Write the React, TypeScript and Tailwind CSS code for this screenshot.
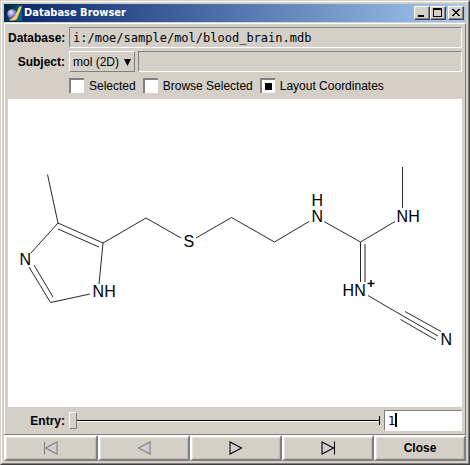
import { useState } from "react";
import type { ReactNode } from "react";

function TitleButton({ label, children }: { label: string; children: ReactNode }) {
  return (
    <button
      aria-label={label}
      className="flex h-[14px] w-4 items-center justify-center border border-t-white border-l-white border-r-[#404040] border-b-[#404040] bg-[#d4d0c8] shadow-[inset_-1px_-1px_0_#808080]"
    >
      <svg width="14" height="12" viewBox="0 0 14 12" shapeRendering="crispEdges">
        {children}
      </svg>
    </button>
  );
}

function NavButton({ label, disabled = false, children }: { label: string; disabled?: boolean; children: ReactNode }) {
  return (
    <button
      aria-label={label}
      disabled={disabled}
      className="flex h-[26px] flex-1 items-center justify-center border-2 border-t-white border-l-white border-r-[#808080] border-b-[#808080] bg-[#d4d0c8] text-[12px] leading-4 font-bold text-black shadow-[inset_1px_1px_0_#e4e2dd,inset_-1px_-1px_0_#c0bdb6] first:basis-[6px] disabled:text-[#808080]"
    >
      {children}
    </button>
  );
}

function NavIcon({ d }: { d: string }) {
  return (
    <svg width="14" height="14" viewBox="0 0 14 14" fill="#d0d0d4" stroke="currentColor" strokeWidth="1.1">
      <path d={d} />
    </svg>
  );
}

function CheckOption({ id, label, initial = false }: { id: string; label: string; initial?: boolean }) {
  const [on, setOn] = useState(initial);
  return (
    <div className="flex items-center gap-[5px]">
      <input
        id={id}
        type="checkbox"
        checked={on}
        onChange={(e) => setOn(e.target.checked)}
        className="grid size-[15px] shrink-0 appearance-none place-content-center border-t-2 border-l-2 border-[#808080] bg-white checked:before:block checked:before:size-[7px] checked:before:bg-black checked:before:content-['']"
      />
      <label htmlFor={id}>{label}</label>
    </div>
  );
}

const bonds: number[][] = [
  [47.5, 174.5, 58, 223],
  [58, 223, 103, 243],
  [58, 229, 99, 247],
  [103, 243, 99, 284],
  [58, 223, 31, 253],
  [29, 267, 50.5, 302.5],
  [34, 265, 53, 297],
  [50.5, 302.5, 90, 294],
  [103, 243, 146, 218],
  [146, 218, 181, 238],
  [196, 238, 231.5, 217.5],
  [231.5, 217.5, 274.5, 242],
  [274.5, 242, 309, 221.5],
  [324, 221.5, 360.5, 242],
  [360.5, 242, 395, 221.5],
  [402.5, 167, 402.5, 208],
  [360.5, 242, 360.5, 282],
  [365, 244, 365, 282],
  [368, 295.5, 403, 316],
  [403, 316, 438, 336],
  [405, 311.5, 441, 331.5],
  [400.5, 319.5, 436, 340],
];

const atoms: [string, number, number][] = [
  ["N", 19, 265],
  ["NH", 92, 297],
  ["S", 183, 247],
  ["H", 311, 206],
  ["N", 311, 222],
  ["NH", 396, 222],
  ["HN", 342, 296],
  ["N", 440, 345],
];

function Molecule() {
  return (
    <svg viewBox="8 99 454 308" className="block h-auto w-full bg-white">
      <g stroke="#000" strokeWidth="0.85">
        {bonds.map(([x1, y1, x2, y2], i) => (
          <line key={i} x1={x1} y1={y1} x2={x2} y2={y2} />
        ))}
      </g>
      <g fontFamily="'Liberation Sans', Arial, sans-serif" fontSize="16">
        {atoms.map(([t, x, y], i) => (
          <text key={i} x={x + 0.6} y={y}>
            {t}
          </text>
        ))}
      </g>
      <path d="M367.5 283.5h7M371 280v7" stroke="#000" strokeWidth="1.5" />
    </svg>
  );
}

export default function App() {
  const [entry, setEntry] = useState("1");
  const sunken = "border border-t-[#808080] border-l-[#808080] border-r-white border-b-white";
  return (
    <main className="border border-t-[#d4d0c8] border-l-[#d4d0c8] border-r-[#404040] border-b-[#404040] bg-[#d4d0c8] font-['Liberation_Sans',Arial,sans-serif] text-[12px] leading-4 text-black">
      <div className="border border-t-white border-l-white border-r-[#808080] border-b-[#808080] p-[2px]">
        <header className="flex h-[18px] items-center bg-linear-to-r from-[#0a246a] to-[#a6caf0] px-[2px]">
          <svg width="16" height="16" viewBox="0 0 16 16" className="mr-[2px]">
            <defs>
              <radialGradient id="orb" cx="0.4" cy="0.35" r="0.65">
                <stop offset="0" stopColor="#f0ecff" />
                <stop offset="0.5" stopColor="#9c90d8" />
                <stop offset="1" stopColor="#50449c" />
              </radialGradient>
              <linearGradient id="sea" x1="0" y1="0" x2="1" y2="0.4">
                <stop offset="0" stopColor="#00202c" />
                <stop offset="1" stopColor="#08686c" />
              </linearGradient>
            </defs>
            <rect width="16" height="16" fill="url(#sea)" />
            <circle cx="6" cy="9" r="4.8" fill="url(#orb)" />
            <path d="M16 1L13 2L9 10.5Q7 13.5 3 15Q8 16.5 11 14L13 9Z" fill="#f4cc68" />
          </svg>
          <h1 className="flex-1 font-['DejaVu_Sans_Condensed','DejaVu_Sans',sans-serif] text-[11px] font-bold text-white">Database Browser</h1>
          <TitleButton label="Minimize">
            <path d="M3 8h6v2h-6z" />
          </TitleButton>
          <TitleButton label="Maximize">
            <path fillRule="evenodd" d="M2 1h9v9h-9zM3 3v6h7v-6z" />
          </TitleButton>
          <span className="w-[2px]" />
          <TitleButton label="Close window">
            <path d="M3 2h2v1h1v1h2v-1h1v-1h2v1h-1v1h-1v1h-1v1h1v1h1v1h1v1h-2v-1h-1v-1h-2v1h-1v1h-2v-1h1v-1h1v-1h1v-1h-1v-1h-1v-1h-1z" />
          </TitleButton>
        </header>
        <div className="mt-px border border-t-white border-l-white border-r-[#808080] border-b-[#808080]">
          <div className="px-[3px] pt-[3px]">
            <div className="grid grid-cols-[57px_1fr] gap-x-1 gap-y-[3px]">
              <label htmlFor="db" className="self-center text-right font-bold">Database:</label>
              <input
                id="db"
                readOnly
                value="i:/moe/sample/mol/blood_brain.mdb"
                className={`${sunken} h-[21px] w-full min-w-0 px-[3px] font-['DejaVu_Sans_Mono',monospace] text-[12px] outline-none`}
              />
              <label htmlFor="subject" className="self-center text-right font-bold">Subject:</label>
              <div className="flex gap-[3px]">
                <div className="relative">
                  <select
                    id="subject"
                    className="block h-[21px] w-[66px] appearance-none border border-t-white border-l-white border-r-[#808080] border-b-[#808080] bg-[#d4d0c8] pl-[3px] outline-none"
                  >
                    <option>mol (2D)</option>
                  </select>
                  <svg width="7" height="7" viewBox="0 0 7 7" className="pointer-events-none absolute top-2 right-1">
                    <path d="M0 0h7L3.5 7z" />
                  </svg>
                </div>
                <input aria-label="Subject value" readOnly className={`${sunken} h-[21px] min-w-0 flex-1 outline-none`} />
              </div>
              <div className="col-start-2 flex h-[21px] items-center gap-[7px]">
                <CheckOption id="sel" label="Selected" />
                <CheckOption id="browse" label="Browse Selected" />
                <CheckOption id="layout" label="Layout Coordinates" initial />
              </div>
            </div>
            <div className="mt-[3px]">
              <Molecule />
            </div>
            <div className="flex items-center gap-1 py-[3px]">
              <label htmlFor="entry" className="w-[57px] text-right font-bold">Entry:</label>
              <div className="flex flex-1 items-center">
                <input
                  id="entry"
                  type="range"
                  min={1}
                  max={100}
                  value={Number(entry) || 1}
                  onChange={(e) => setEntry(e.target.value)}
                  className="h-[17px] min-w-0 flex-1 appearance-none bg-[linear-gradient(transparent_8px,#000_8px,#000_9px,#fff_9px,#fff_10px,transparent_10px)] outline-none [&::-webkit-slider-thumb]:h-[17px] [&::-webkit-slider-thumb]:w-2 [&::-webkit-slider-thumb]:appearance-none [&::-webkit-slider-thumb]:border [&::-webkit-slider-thumb]:border-t-white [&::-webkit-slider-thumb]:border-r-[#808080] [&::-webkit-slider-thumb]:border-b-[#808080] [&::-webkit-slider-thumb]:border-l-white [&::-webkit-slider-thumb]:bg-[#d4d0c8]"
                />
                <span className="h-[9px] w-px bg-black" />
              </div>
              <div className="relative">
                <input
                  aria-label="Entry number"
                  value={entry}
                  onChange={(e) => setEntry(e.target.value)}
                  className="block h-[21px] w-[78px] border border-t-[#808080] border-l-[#808080] border-r-white border-b-white bg-white px-[3px] font-['DejaVu_Sans_Mono',monospace] text-[12px] outline-none"
                />
                <span className="absolute top-[3px] left-[11px] h-[14px] w-[2px] bg-black" />
              </div>
            </div>
          </div>
          <nav className="-mx-px -mb-px flex border-t border-[#808080]">
            <NavButton label="First entry" disabled>
              <NavIcon d="M0.5 0.5v13M13 1v12L1.5 7z" />
            </NavButton>
            <NavButton label="Previous entry" disabled>
              <NavIcon d="M13 1v12L1.5 7z" />
            </NavButton>
            <NavButton label="Next entry">
              <NavIcon d="M1 1v12L12.5 7z" />
            </NavButton>
            <NavButton label="Last entry">
              <NavIcon d="M1 1v12L12.5 7zM13.5 0.5v13" />
            </NavButton>
            <NavButton label="Close">Close</NavButton>
          </nav>
        </div>
      </div>
    </main>
  );
}
